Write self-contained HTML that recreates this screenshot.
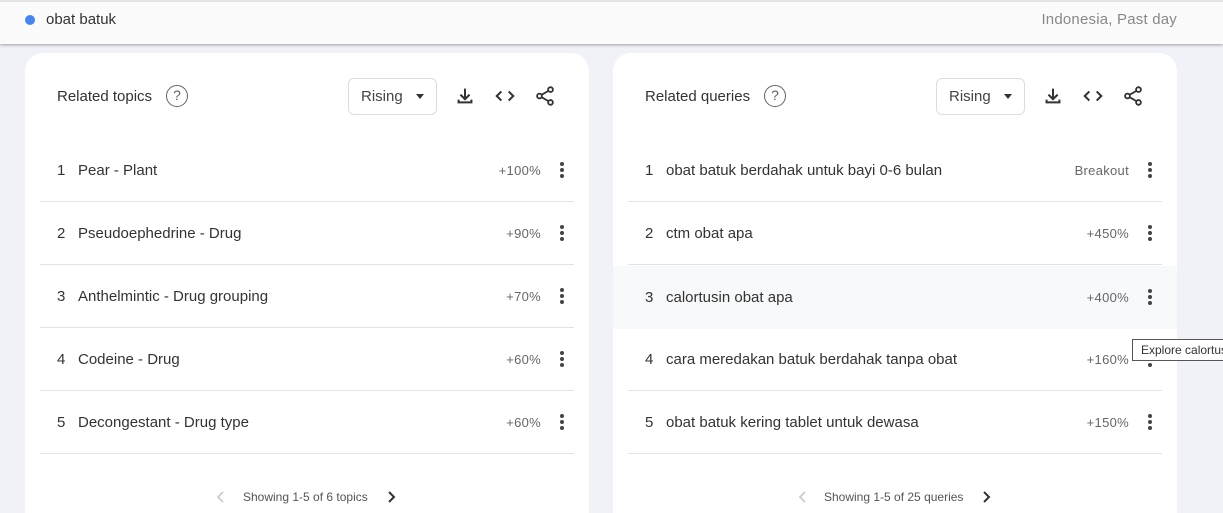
<!DOCTYPE html>
<html><head><meta charset="utf-8"><style>
*{box-sizing:border-box;margin:0;padding:0}
html,body{width:1223px;height:513px;overflow:hidden}
body{background:#f0f2f8;font-family:"Liberation Sans",Arial,sans-serif;position:relative}
.top{position:absolute;left:0;top:0;width:1223px;height:44px;background:#fbfbfb;box-shadow:0 1px 3px rgba(0,0,0,.35);border-top:2px solid #e4e4e4}
.dot{position:absolute;left:25px;top:13px;width:10px;height:10px;border-radius:50%;background:#4a86e8}
.term{position:absolute;left:46px;top:9px;font-size:15px;color:#333}
.geo{position:absolute;right:46px;top:9px;font-size:15px;color:#888;letter-spacing:.2px}
.card{position:absolute;top:53px;width:564px;height:480px;background:#fff;border-radius:18px;overflow:hidden}
.title{position:absolute;left:32px;top:35px;font-size:15px;color:#333}
.help{position:absolute;top:32px;width:22px;height:22px;border:1.6px solid #5f6368;border-radius:50%;font-size:14px;color:#5f6368;text-align:center;line-height:19px}
.sel{position:absolute;left:323px;top:25px;width:89px;height:37px;border:1px solid #dadce0;border-radius:6px;font-size:15px;color:#444;padding:9px 0 0 12px}
.sel:after{content:"";position:absolute;right:12px;top:15px;border:4px solid transparent;border-top:5px solid #333}
.ic{position:absolute;top:32px}
.row{position:absolute;left:0;width:564px;height:63px}
.row .in{position:absolute;left:15px;right:15px;bottom:0;border-bottom:1px solid #e3e3e3;height:63px}
.n{position:absolute;left:32px;top:23px;font-size:15px;color:#333}
.t{position:absolute;left:53px;top:23px;font-size:15px;color:#333}
.v{position:absolute;right:48px;top:24px;font-size:13px;color:#666;letter-spacing:.3px}
.m{position:absolute;right:25px;top:23px;width:4px}
.m i{display:block;width:4px;height:4px;border-radius:50%;background:#444;margin-bottom:2px}
.foot{position:absolute;top:437px;font-size:12px;color:#555}
.chev{position:absolute;top:437px}
.tip{position:absolute;left:1132px;top:339px;height:22px;width:100px;border:1px solid #555;background:#fff;font-size:12px;color:#333;padding:3px 0 0 8px;white-space:nowrap;overflow:hidden}
</style></head><body>
<div class="top"><div class="dot"></div><div class="term">obat batuk</div><div class="geo">Indonesia, Past day</div></div>

<div class="card" style="left:25px">
<div class="title">Related topics</div><div class="help" style="left:141px">?</div>
<div class="sel">Rising</div>
<svg class="ic" style="left:429px" width="22" height="22" viewBox="0 0 24 24"><path d="M12 4v11M7 10.5l5 5 5-5M5 16v3h14v-3" fill="none" stroke="#333" stroke-width="2.2"/></svg>
<svg class="ic" style="left:469px" width="22" height="22" viewBox="0 0 24 24"><path d="M8 7l-5 5 5 5M16 7l5 5-5 5" fill="none" stroke="#333" stroke-width="2.2"/></svg>
<svg class="ic" style="left:509px" width="22" height="22" viewBox="0 0 24 24"><circle cx="18" cy="5" r="2.6" fill="none" stroke="#333" stroke-width="2"/><circle cx="6" cy="12" r="2.6" fill="none" stroke="#333" stroke-width="2"/><circle cx="18" cy="19" r="2.6" fill="none" stroke="#333" stroke-width="2"/><path d="M8.3 10.7l7.4-4.3M8.3 13.3l7.4 4.3" stroke="#333" stroke-width="2"/></svg>
<div class="row" style="top:86px"><div class="in"></div><span class="n">1</span><span class="t">Pear - Plant</span><span class="v">+100%</span><span class="m"><i></i><i></i><i></i></span></div>
<div class="row" style="top:149px"><div class="in"></div><span class="n">2</span><span class="t">Pseudoephedrine - Drug</span><span class="v">+90%</span><span class="m"><i></i><i></i><i></i></span></div>
<div class="row" style="top:212px"><div class="in"></div><span class="n">3</span><span class="t">Anthelmintic - Drug grouping</span><span class="v">+70%</span><span class="m"><i></i><i></i><i></i></span></div>
<div class="row" style="top:275px"><div class="in"></div><span class="n">4</span><span class="t">Codeine - Drug</span><span class="v">+60%</span><span class="m"><i></i><i></i><i></i></span></div>
<div class="row" style="top:338px"><div class="in"></div><span class="n">5</span><span class="t">Decongestant - Drug type</span><span class="v">+60%</span><span class="m"><i></i><i></i><i></i></span></div>
<svg class="chev" style="left:191px" width="10" height="14" viewBox="0 0 10 14"><path d="M7 2L2 7l5 5" fill="none" stroke="#ccc" stroke-width="1.8"/></svg>
<div class="foot" style="left:218px">Showing 1-5 of 6 topics</div>
<svg class="chev" style="left:361px" width="10" height="14" viewBox="0 0 10 14"><path d="M3 2l5 5-5 5" fill="none" stroke="#333" stroke-width="2"/></svg>
</div>

<div class="card" style="left:613px">
<div class="title">Related queries</div><div class="help" style="left:151px">?</div>
<div class="sel">Rising</div>
<svg class="ic" style="left:429px" width="22" height="22" viewBox="0 0 24 24"><path d="M12 4v11M7 10.5l5 5 5-5M5 16v3h14v-3" fill="none" stroke="#333" stroke-width="2.2"/></svg>
<svg class="ic" style="left:469px" width="22" height="22" viewBox="0 0 24 24"><path d="M8 7l-5 5 5 5M16 7l5 5-5 5" fill="none" stroke="#333" stroke-width="2.2"/></svg>
<svg class="ic" style="left:509px" width="22" height="22" viewBox="0 0 24 24"><circle cx="18" cy="5" r="2.6" fill="none" stroke="#333" stroke-width="2"/><circle cx="6" cy="12" r="2.6" fill="none" stroke="#333" stroke-width="2"/><circle cx="18" cy="19" r="2.6" fill="none" stroke="#333" stroke-width="2"/><path d="M8.3 10.7l7.4-4.3M8.3 13.3l7.4 4.3" stroke="#333" stroke-width="2"/></svg>
<div class="row" style="top:86px"><div class="in"></div><span class="n">1</span><span class="t">obat batuk berdahak untuk bayi 0-6 bulan</span><span class="v">Breakout</span><span class="m"><i></i><i></i><i></i></span></div>
<div class="row" style="top:149px"><div class="in"></div><span class="n">2</span><span class="t">ctm obat apa</span><span class="v">+450%</span><span class="m"><i></i><i></i><i></i></span></div>
<div class="row" style="top:213px;background:#f8f9fa"><span class="n">3</span><span class="t">calortusin obat apa</span><span class="v">+400%</span><span class="m"><i></i><i></i><i></i></span></div>
<div class="row" style="top:275px"><div class="in"></div><span class="n">4</span><span class="t">cara meredakan batuk berdahak tanpa obat</span><span class="v">+160%</span><span class="m"><i></i><i></i><i></i></span></div>
<div class="row" style="top:338px"><div class="in"></div><span class="n">5</span><span class="t">obat batuk kering tablet untuk dewasa</span><span class="v">+150%</span><span class="m"><i></i><i></i><i></i></span></div>
<svg class="chev" style="left:185px" width="10" height="14" viewBox="0 0 10 14"><path d="M7 2L2 7l5 5" fill="none" stroke="#ccc" stroke-width="1.8"/></svg>
<div class="foot" style="left:211px">Showing 1-5 of 25 queries</div>
<svg class="chev" style="left:368px" width="10" height="14" viewBox="0 0 10 14"><path d="M3 2l5 5-5 5" fill="none" stroke="#333" stroke-width="2"/></svg>
</div>
<div class="tip">Explore calortusin</div>
</body></html>
